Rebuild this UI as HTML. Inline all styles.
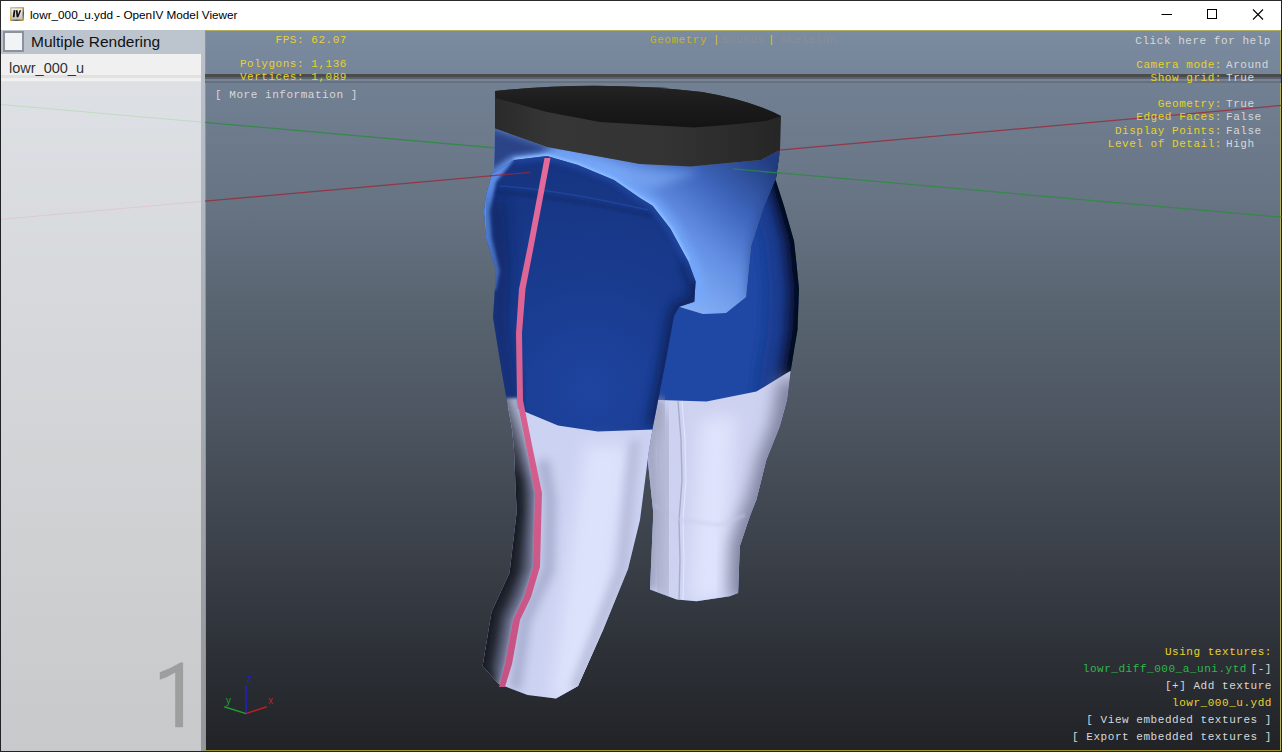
<!DOCTYPE html>
<html><head><meta charset="utf-8">
<style>
*{margin:0;padding:0;box-sizing:border-box}
html,body{width:1282px;height:752px;overflow:hidden;background:#202226}
body{position:relative;font-family:"Liberation Sans",sans-serif}
.abs{position:absolute}
#title{left:0;top:0;width:1281px;height:30px;background:#fff;border-top:1px solid #2a2a2a;border-left:1px solid #2a2a2a}
#vp{left:205px;top:30px;width:1076px;height:721px;background:linear-gradient(rgb(123,139,160) 0px,rgb(118,133,152) 44px,rgb(113,128,147) 52px,rgb(103,116,132) 170px,rgb(90,101,114) 270px,rgb(83,93,106) 330px,rgb(76,85,96) 390px,rgb(58,63,72) 530px,rgb(45,49,55) 620px,rgb(33,35,39) 715px);border:1px solid #b0ac60;border-bottom-color:#9a9030;border-left-color:#a09a40}
.mono{font-family:"Liberation Mono",monospace;font-size:11px;letter-spacing:0.54px;line-height:13px;white-space:pre}
.y{color:#e6d22e}
.w{color:#d8d8d8}
.g{color:#2fb84a}
</style></head>
<body>
<div id="vp" class="abs"></div>
<svg class="abs" style="left:0;top:0" width="1282" height="752">
<!-- horizon -->
<rect x="205" y="74" width="1076" height="3" fill="#4a4b4d"/>
<rect x="205" y="77" width="1076" height="2" fill="#59616e"/>
<rect x="205" y="79" width="1076" height="2" fill="#778596"/>
<rect x="205" y="81" width="1076" height="2" fill="#66707f"/>
<!-- grid lines -->
<line x1="205" y1="122.4" x2="1282" y2="217.2" stroke="#2a8c3c" stroke-width="1.3" opacity="0.8"/>
<line x1="205" y1="201.2" x2="1282" y2="105.4" stroke="#9a2838" stroke-width="1.3" opacity="0.8"/>
</svg>
<!-- PANTS --><svg class="abs" style="left:0;top:0" width="1282" height="752">
<defs>
<filter id="b3" x="-50%" y="-50%" width="200%" height="200%"><feGaussianBlur stdDeviation="3"/></filter>
<filter id="b5" x="-50%" y="-50%" width="200%" height="200%"><feGaussianBlur stdDeviation="5"/></filter>
<filter id="b8" x="-50%" y="-50%" width="200%" height="200%"><feGaussianBlur stdDeviation="8"/></filter>
<filter id="b12" x="-50%" y="-50%" width="200%" height="200%"><feGaussianBlur stdDeviation="12"/></filter>
<filter id="b2" x="-50%" y="-50%" width="200%" height="200%"><feGaussianBlur stdDeviation="1.5"/></filter>
<clipPath id="cRight"><path d="M679,307 L703,314 L726,313 L746,297 L751,246 L764,206 L776,178 L780,150 L775,178 L784,206 L794,241 L796,259 L799,289 L797.5,330 L794.4,348 L790.7,371 L787,400 L779.7,426.5 L766.4,459.8 L756.4,499.7 L749.8,516.4 L739.8,546.3 L738.1,592.9 L729.8,596.2 L696.5,601.2 L676.6,599.5 L650,589.5 L653.3,513 L647,453 L650,403 L660,360 L668,316 Z"/></clipPath>
<clipPath id="cLeft"><path d="M484,211 L486,195 L492,174 L514,160 L547,156 L578,165 L614,180 L640,198 L652.6,205.7 L670.3,228.4 L688,261 L695.6,281.4 L694.3,301.7 L679.2,306.7 L674,316 L666,360 L653,426.5 L649,450 L640,520 L628,569 L603,630 L578,686 L556,698.5 L527.5,695 L498.7,684 L482.6,666 L491.5,612 L509.5,573 L516.7,512 L514,450 L512,429.4 L502,373.6 L493,317.7 L496,271 L486,238 Z"/></clipPath>
<clipPath id="cHip"><path d="M495,128.5 L547,147 L640,164 L690.5,166.5 L761,160 L780,150 L776,178 L764,206 L751,246 L746,297 L726,313 L703,314 L679.2,306.7 L694.3,301.7 L695.6,281.4 L688,261 L670.3,228.4 L652.6,205.7 L640,198 L614,180 L578,165 L547,156 L514,160 L492,174 L486,206 L496,270 L494,171 Z"/></clipPath>
<linearGradient id="gLight" x1="775" y1="165" x2="665" y2="290" gradientUnits="userSpaceOnUse">
<stop offset="0" stop-color="#223c80"/>
<stop offset="0.35" stop-color="#3e66bc"/>
<stop offset="0.65" stop-color="#6490e4"/>
<stop offset="1" stop-color="#86b2f8"/>
</linearGradient>
<linearGradient id="gBand" x1="495" y1="0" x2="781" y2="0" gradientUnits="userSpaceOnUse">
<stop offset="0" stop-color="#2a2a2a"/>
<stop offset="0.2" stop-color="#363636"/>
<stop offset="0.6" stop-color="#333333"/>
<stop offset="1" stop-color="#262626"/>
</linearGradient>
<linearGradient id="gTop" x1="0" y1="84" x2="0" y2="127" gradientUnits="userSpaceOnUse">
<stop offset="0" stop-color="#242424"/>
<stop offset="0.5" stop-color="#1b1b1b"/>
<stop offset="1" stop-color="#141414"/>
</linearGradient>
</defs>
<!-- RIGHT LEG -->
<g clip-path="url(#cRight)">
<rect x="640" y="140" width="170" height="470" fill="#1f47a4"/>
<defs><linearGradient id="r0" x1="738.9" y1="0" x2="780.9" y2="0" gradientUnits="userSpaceOnUse"><stop offset="0" stop-color="#12307a" stop-opacity="0"/><stop offset="0.55" stop-color="#12307a" stop-opacity="0.55"/><stop offset="0.85" stop-color="#081640" stop-opacity="0.95"/><stop offset="1" stop-color="#03060e"/></linearGradient><linearGradient id="r1" x1="738.3" y1="0" x2="780.3" y2="0" gradientUnits="userSpaceOnUse"><stop offset="0" stop-color="#12307a" stop-opacity="0"/><stop offset="0.55" stop-color="#12307a" stop-opacity="0.55"/><stop offset="0.85" stop-color="#081640" stop-opacity="0.95"/><stop offset="1" stop-color="#03060e"/></linearGradient><linearGradient id="r2" x1="737.8" y1="0" x2="779.8" y2="0" gradientUnits="userSpaceOnUse"><stop offset="0" stop-color="#12307a" stop-opacity="0"/><stop offset="0.55" stop-color="#12307a" stop-opacity="0.55"/><stop offset="0.85" stop-color="#081640" stop-opacity="0.95"/><stop offset="1" stop-color="#03060e"/></linearGradient><linearGradient id="r3" x1="737.3" y1="0" x2="779.3" y2="0" gradientUnits="userSpaceOnUse"><stop offset="0" stop-color="#12307a" stop-opacity="0"/><stop offset="0.55" stop-color="#12307a" stop-opacity="0.55"/><stop offset="0.85" stop-color="#081640" stop-opacity="0.95"/><stop offset="1" stop-color="#03060e"/></linearGradient><linearGradient id="r4" x1="736.9" y1="0" x2="778.9" y2="0" gradientUnits="userSpaceOnUse"><stop offset="0" stop-color="#12307a" stop-opacity="0"/><stop offset="0.55" stop-color="#12307a" stop-opacity="0.55"/><stop offset="0.85" stop-color="#081640" stop-opacity="0.95"/><stop offset="1" stop-color="#03060e"/></linearGradient><linearGradient id="r5" x1="736.4" y1="0" x2="778.4" y2="0" gradientUnits="userSpaceOnUse"><stop offset="0" stop-color="#12307a" stop-opacity="0"/><stop offset="0.55" stop-color="#12307a" stop-opacity="0.55"/><stop offset="0.85" stop-color="#081640" stop-opacity="0.95"/><stop offset="1" stop-color="#03060e"/></linearGradient><linearGradient id="r6" x1="736.0" y1="0" x2="778.0" y2="0" gradientUnits="userSpaceOnUse"><stop offset="0" stop-color="#12307a" stop-opacity="0"/><stop offset="0.55" stop-color="#12307a" stop-opacity="0.55"/><stop offset="0.85" stop-color="#081640" stop-opacity="0.95"/><stop offset="1" stop-color="#03060e"/></linearGradient><linearGradient id="r7" x1="735.5" y1="0" x2="777.5" y2="0" gradientUnits="userSpaceOnUse"><stop offset="0" stop-color="#12307a" stop-opacity="0"/><stop offset="0.55" stop-color="#12307a" stop-opacity="0.55"/><stop offset="0.85" stop-color="#081640" stop-opacity="0.95"/><stop offset="1" stop-color="#03060e"/></linearGradient><linearGradient id="r8" x1="735.1" y1="0" x2="777.1" y2="0" gradientUnits="userSpaceOnUse"><stop offset="0" stop-color="#12307a" stop-opacity="0"/><stop offset="0.55" stop-color="#12307a" stop-opacity="0.55"/><stop offset="0.85" stop-color="#081640" stop-opacity="0.95"/><stop offset="1" stop-color="#03060e"/></linearGradient><linearGradient id="r9" x1="734.6" y1="0" x2="776.6" y2="0" gradientUnits="userSpaceOnUse"><stop offset="0" stop-color="#12307a" stop-opacity="0"/><stop offset="0.55" stop-color="#12307a" stop-opacity="0.55"/><stop offset="0.85" stop-color="#081640" stop-opacity="0.95"/><stop offset="1" stop-color="#03060e"/></linearGradient><linearGradient id="r10" x1="734.2" y1="0" x2="776.2" y2="0" gradientUnits="userSpaceOnUse"><stop offset="0" stop-color="#12307a" stop-opacity="0"/><stop offset="0.55" stop-color="#12307a" stop-opacity="0.55"/><stop offset="0.85" stop-color="#081640" stop-opacity="0.95"/><stop offset="1" stop-color="#03060e"/></linearGradient><linearGradient id="r11" x1="733.9" y1="0" x2="775.9" y2="0" gradientUnits="userSpaceOnUse"><stop offset="0" stop-color="#12307a" stop-opacity="0"/><stop offset="0.55" stop-color="#12307a" stop-opacity="0.55"/><stop offset="0.85" stop-color="#081640" stop-opacity="0.95"/><stop offset="1" stop-color="#03060e"/></linearGradient><linearGradient id="r12" x1="734.8" y1="0" x2="776.8" y2="0" gradientUnits="userSpaceOnUse"><stop offset="0" stop-color="#12307a" stop-opacity="0"/><stop offset="0.55" stop-color="#12307a" stop-opacity="0.55"/><stop offset="0.85" stop-color="#081640" stop-opacity="0.95"/><stop offset="1" stop-color="#03060e"/></linearGradient><linearGradient id="r13" x1="735.7" y1="0" x2="777.7" y2="0" gradientUnits="userSpaceOnUse"><stop offset="0" stop-color="#12307a" stop-opacity="0"/><stop offset="0.55" stop-color="#12307a" stop-opacity="0.55"/><stop offset="0.85" stop-color="#081640" stop-opacity="0.95"/><stop offset="1" stop-color="#03060e"/></linearGradient><linearGradient id="r14" x1="736.6" y1="0" x2="778.6" y2="0" gradientUnits="userSpaceOnUse"><stop offset="0" stop-color="#12307a" stop-opacity="0"/><stop offset="0.55" stop-color="#12307a" stop-opacity="0.55"/><stop offset="0.85" stop-color="#081640" stop-opacity="0.95"/><stop offset="1" stop-color="#03060e"/></linearGradient><linearGradient id="r15" x1="737.5" y1="0" x2="779.5" y2="0" gradientUnits="userSpaceOnUse"><stop offset="0" stop-color="#12307a" stop-opacity="0"/><stop offset="0.55" stop-color="#12307a" stop-opacity="0.55"/><stop offset="0.85" stop-color="#081640" stop-opacity="0.95"/><stop offset="1" stop-color="#03060e"/></linearGradient><linearGradient id="r16" x1="738.3" y1="0" x2="780.3" y2="0" gradientUnits="userSpaceOnUse"><stop offset="0" stop-color="#12307a" stop-opacity="0"/><stop offset="0.55" stop-color="#12307a" stop-opacity="0.55"/><stop offset="0.85" stop-color="#081640" stop-opacity="0.95"/><stop offset="1" stop-color="#03060e"/></linearGradient><linearGradient id="r17" x1="739.2" y1="0" x2="781.2" y2="0" gradientUnits="userSpaceOnUse"><stop offset="0" stop-color="#12307a" stop-opacity="0"/><stop offset="0.55" stop-color="#12307a" stop-opacity="0.55"/><stop offset="0.85" stop-color="#081640" stop-opacity="0.95"/><stop offset="1" stop-color="#03060e"/></linearGradient><linearGradient id="r18" x1="740.1" y1="0" x2="782.1" y2="0" gradientUnits="userSpaceOnUse"><stop offset="0" stop-color="#12307a" stop-opacity="0"/><stop offset="0.55" stop-color="#12307a" stop-opacity="0.55"/><stop offset="0.85" stop-color="#081640" stop-opacity="0.95"/><stop offset="1" stop-color="#03060e"/></linearGradient><linearGradient id="r19" x1="741.0" y1="0" x2="783.0" y2="0" gradientUnits="userSpaceOnUse"><stop offset="0" stop-color="#12307a" stop-opacity="0"/><stop offset="0.55" stop-color="#12307a" stop-opacity="0.55"/><stop offset="0.85" stop-color="#081640" stop-opacity="0.95"/><stop offset="1" stop-color="#03060e"/></linearGradient><linearGradient id="r20" x1="741.9" y1="0" x2="783.9" y2="0" gradientUnits="userSpaceOnUse"><stop offset="0" stop-color="#12307a" stop-opacity="0"/><stop offset="0.55" stop-color="#12307a" stop-opacity="0.55"/><stop offset="0.85" stop-color="#081640" stop-opacity="0.95"/><stop offset="1" stop-color="#03060e"/></linearGradient><linearGradient id="r21" x1="742.7" y1="0" x2="784.7" y2="0" gradientUnits="userSpaceOnUse"><stop offset="0" stop-color="#12307a" stop-opacity="0"/><stop offset="0.55" stop-color="#12307a" stop-opacity="0.55"/><stop offset="0.85" stop-color="#081640" stop-opacity="0.95"/><stop offset="1" stop-color="#03060e"/></linearGradient><linearGradient id="r22" x1="743.6" y1="0" x2="785.6" y2="0" gradientUnits="userSpaceOnUse"><stop offset="0" stop-color="#12307a" stop-opacity="0"/><stop offset="0.55" stop-color="#12307a" stop-opacity="0.55"/><stop offset="0.85" stop-color="#081640" stop-opacity="0.95"/><stop offset="1" stop-color="#03060e"/></linearGradient><linearGradient id="r23" x1="744.4" y1="0" x2="786.4" y2="0" gradientUnits="userSpaceOnUse"><stop offset="0" stop-color="#12307a" stop-opacity="0"/><stop offset="0.55" stop-color="#12307a" stop-opacity="0.55"/><stop offset="0.85" stop-color="#081640" stop-opacity="0.95"/><stop offset="1" stop-color="#03060e"/></linearGradient><linearGradient id="r24" x1="745.3" y1="0" x2="787.3" y2="0" gradientUnits="userSpaceOnUse"><stop offset="0" stop-color="#12307a" stop-opacity="0"/><stop offset="0.55" stop-color="#12307a" stop-opacity="0.55"/><stop offset="0.85" stop-color="#081640" stop-opacity="0.95"/><stop offset="1" stop-color="#03060e"/></linearGradient><linearGradient id="r25" x1="746.1" y1="0" x2="788.1" y2="0" gradientUnits="userSpaceOnUse"><stop offset="0" stop-color="#12307a" stop-opacity="0"/><stop offset="0.55" stop-color="#12307a" stop-opacity="0.55"/><stop offset="0.85" stop-color="#081640" stop-opacity="0.95"/><stop offset="1" stop-color="#03060e"/></linearGradient><linearGradient id="r26" x1="747.0" y1="0" x2="789.0" y2="0" gradientUnits="userSpaceOnUse"><stop offset="0" stop-color="#12307a" stop-opacity="0"/><stop offset="0.55" stop-color="#12307a" stop-opacity="0.55"/><stop offset="0.85" stop-color="#081640" stop-opacity="0.95"/><stop offset="1" stop-color="#03060e"/></linearGradient><linearGradient id="r27" x1="747.9" y1="0" x2="789.9" y2="0" gradientUnits="userSpaceOnUse"><stop offset="0" stop-color="#12307a" stop-opacity="0"/><stop offset="0.55" stop-color="#12307a" stop-opacity="0.55"/><stop offset="0.85" stop-color="#081640" stop-opacity="0.95"/><stop offset="1" stop-color="#03060e"/></linearGradient><linearGradient id="r28" x1="748.7" y1="0" x2="790.7" y2="0" gradientUnits="userSpaceOnUse"><stop offset="0" stop-color="#12307a" stop-opacity="0"/><stop offset="0.55" stop-color="#12307a" stop-opacity="0.55"/><stop offset="0.85" stop-color="#081640" stop-opacity="0.95"/><stop offset="1" stop-color="#03060e"/></linearGradient><linearGradient id="r29" x1="749.6" y1="0" x2="791.6" y2="0" gradientUnits="userSpaceOnUse"><stop offset="0" stop-color="#12307a" stop-opacity="0"/><stop offset="0.55" stop-color="#12307a" stop-opacity="0.55"/><stop offset="0.85" stop-color="#081640" stop-opacity="0.95"/><stop offset="1" stop-color="#03060e"/></linearGradient><linearGradient id="r30" x1="750.4" y1="0" x2="792.4" y2="0" gradientUnits="userSpaceOnUse"><stop offset="0" stop-color="#12307a" stop-opacity="0"/><stop offset="0.55" stop-color="#12307a" stop-opacity="0.55"/><stop offset="0.85" stop-color="#081640" stop-opacity="0.95"/><stop offset="1" stop-color="#03060e"/></linearGradient><linearGradient id="r31" x1="751.3" y1="0" x2="793.3" y2="0" gradientUnits="userSpaceOnUse"><stop offset="0" stop-color="#12307a" stop-opacity="0"/><stop offset="0.55" stop-color="#12307a" stop-opacity="0.55"/><stop offset="0.85" stop-color="#081640" stop-opacity="0.95"/><stop offset="1" stop-color="#03060e"/></linearGradient><linearGradient id="r32" x1="752.1" y1="0" x2="794.1" y2="0" gradientUnits="userSpaceOnUse"><stop offset="0" stop-color="#12307a" stop-opacity="0"/><stop offset="0.55" stop-color="#12307a" stop-opacity="0.55"/><stop offset="0.85" stop-color="#081640" stop-opacity="0.95"/><stop offset="1" stop-color="#03060e"/></linearGradient><linearGradient id="r33" x1="752.4" y1="0" x2="794.4" y2="0" gradientUnits="userSpaceOnUse"><stop offset="0" stop-color="#12307a" stop-opacity="0"/><stop offset="0.55" stop-color="#12307a" stop-opacity="0.55"/><stop offset="0.85" stop-color="#081640" stop-opacity="0.95"/><stop offset="1" stop-color="#03060e"/></linearGradient><linearGradient id="r34" x1="752.7" y1="0" x2="794.7" y2="0" gradientUnits="userSpaceOnUse"><stop offset="0" stop-color="#12307a" stop-opacity="0"/><stop offset="0.55" stop-color="#12307a" stop-opacity="0.55"/><stop offset="0.85" stop-color="#081640" stop-opacity="0.95"/><stop offset="1" stop-color="#03060e"/></linearGradient><linearGradient id="r35" x1="753.1" y1="0" x2="795.1" y2="0" gradientUnits="userSpaceOnUse"><stop offset="0" stop-color="#12307a" stop-opacity="0"/><stop offset="0.55" stop-color="#12307a" stop-opacity="0.55"/><stop offset="0.85" stop-color="#081640" stop-opacity="0.95"/><stop offset="1" stop-color="#03060e"/></linearGradient><linearGradient id="r36" x1="753.4" y1="0" x2="795.4" y2="0" gradientUnits="userSpaceOnUse"><stop offset="0" stop-color="#12307a" stop-opacity="0"/><stop offset="0.55" stop-color="#12307a" stop-opacity="0.55"/><stop offset="0.85" stop-color="#081640" stop-opacity="0.95"/><stop offset="1" stop-color="#03060e"/></linearGradient><linearGradient id="r37" x1="753.7" y1="0" x2="795.7" y2="0" gradientUnits="userSpaceOnUse"><stop offset="0" stop-color="#12307a" stop-opacity="0"/><stop offset="0.55" stop-color="#12307a" stop-opacity="0.55"/><stop offset="0.85" stop-color="#081640" stop-opacity="0.95"/><stop offset="1" stop-color="#03060e"/></linearGradient><linearGradient id="r38" x1="754.0" y1="0" x2="796.0" y2="0" gradientUnits="userSpaceOnUse"><stop offset="0" stop-color="#12307a" stop-opacity="0"/><stop offset="0.55" stop-color="#12307a" stop-opacity="0.55"/><stop offset="0.85" stop-color="#081640" stop-opacity="0.95"/><stop offset="1" stop-color="#03060e"/></linearGradient><linearGradient id="r39" x1="754.4" y1="0" x2="796.4" y2="0" gradientUnits="userSpaceOnUse"><stop offset="0" stop-color="#12307a" stop-opacity="0"/><stop offset="0.55" stop-color="#12307a" stop-opacity="0.55"/><stop offset="0.85" stop-color="#081640" stop-opacity="0.95"/><stop offset="1" stop-color="#03060e"/></linearGradient><linearGradient id="r40" x1="754.6" y1="0" x2="796.6" y2="0" gradientUnits="userSpaceOnUse"><stop offset="0" stop-color="#12307a" stop-opacity="0"/><stop offset="0.55" stop-color="#12307a" stop-opacity="0.55"/><stop offset="0.85" stop-color="#081640" stop-opacity="0.95"/><stop offset="1" stop-color="#03060e"/></linearGradient><linearGradient id="r41" x1="755.0" y1="0" x2="797.0" y2="0" gradientUnits="userSpaceOnUse"><stop offset="0" stop-color="#12307a" stop-opacity="0"/><stop offset="0.55" stop-color="#12307a" stop-opacity="0.55"/><stop offset="0.85" stop-color="#081640" stop-opacity="0.95"/><stop offset="1" stop-color="#03060e"/></linearGradient><linearGradient id="r42" x1="755.2" y1="0" x2="797.2" y2="0" gradientUnits="userSpaceOnUse"><stop offset="0" stop-color="#12307a" stop-opacity="0"/><stop offset="0.55" stop-color="#12307a" stop-opacity="0.55"/><stop offset="0.85" stop-color="#081640" stop-opacity="0.95"/><stop offset="1" stop-color="#03060e"/></linearGradient><linearGradient id="r43" x1="755.5" y1="0" x2="797.5" y2="0" gradientUnits="userSpaceOnUse"><stop offset="0" stop-color="#12307a" stop-opacity="0"/><stop offset="0.55" stop-color="#12307a" stop-opacity="0.55"/><stop offset="0.85" stop-color="#081640" stop-opacity="0.95"/><stop offset="1" stop-color="#03060e"/></linearGradient><linearGradient id="r44" x1="755.9" y1="0" x2="797.9" y2="0" gradientUnits="userSpaceOnUse"><stop offset="0" stop-color="#12307a" stop-opacity="0"/><stop offset="0.55" stop-color="#12307a" stop-opacity="0.55"/><stop offset="0.85" stop-color="#081640" stop-opacity="0.95"/><stop offset="1" stop-color="#03060e"/></linearGradient><linearGradient id="r45" x1="756.1" y1="0" x2="798.1" y2="0" gradientUnits="userSpaceOnUse"><stop offset="0" stop-color="#12307a" stop-opacity="0"/><stop offset="0.55" stop-color="#12307a" stop-opacity="0.55"/><stop offset="0.85" stop-color="#081640" stop-opacity="0.95"/><stop offset="1" stop-color="#03060e"/></linearGradient><linearGradient id="r46" x1="756.5" y1="0" x2="798.5" y2="0" gradientUnits="userSpaceOnUse"><stop offset="0" stop-color="#12307a" stop-opacity="0"/><stop offset="0.55" stop-color="#12307a" stop-opacity="0.55"/><stop offset="0.85" stop-color="#081640" stop-opacity="0.95"/><stop offset="1" stop-color="#03060e"/></linearGradient><linearGradient id="r47" x1="756.8" y1="0" x2="798.8" y2="0" gradientUnits="userSpaceOnUse"><stop offset="0" stop-color="#12307a" stop-opacity="0"/><stop offset="0.55" stop-color="#12307a" stop-opacity="0.55"/><stop offset="0.85" stop-color="#081640" stop-opacity="0.95"/><stop offset="1" stop-color="#03060e"/></linearGradient><linearGradient id="r48" x1="757.0" y1="0" x2="799.0" y2="0" gradientUnits="userSpaceOnUse"><stop offset="0" stop-color="#12307a" stop-opacity="0"/><stop offset="0.55" stop-color="#12307a" stop-opacity="0.55"/><stop offset="0.85" stop-color="#081640" stop-opacity="0.95"/><stop offset="1" stop-color="#03060e"/></linearGradient><linearGradient id="r49" x1="756.9" y1="0" x2="798.9" y2="0" gradientUnits="userSpaceOnUse"><stop offset="0" stop-color="#12307a" stop-opacity="0"/><stop offset="0.55" stop-color="#12307a" stop-opacity="0.55"/><stop offset="0.85" stop-color="#081640" stop-opacity="0.95"/><stop offset="1" stop-color="#03060e"/></linearGradient><linearGradient id="r50" x1="756.8" y1="0" x2="798.8" y2="0" gradientUnits="userSpaceOnUse"><stop offset="0" stop-color="#12307a" stop-opacity="0"/><stop offset="0.55" stop-color="#12307a" stop-opacity="0.55"/><stop offset="0.85" stop-color="#081640" stop-opacity="0.95"/><stop offset="1" stop-color="#03060e"/></linearGradient><linearGradient id="r51" x1="756.7" y1="0" x2="798.7" y2="0" gradientUnits="userSpaceOnUse"><stop offset="0" stop-color="#12307a" stop-opacity="0"/><stop offset="0.55" stop-color="#12307a" stop-opacity="0.55"/><stop offset="0.85" stop-color="#081640" stop-opacity="0.95"/><stop offset="1" stop-color="#03060e"/></linearGradient><linearGradient id="r52" x1="756.5" y1="0" x2="798.5" y2="0" gradientUnits="userSpaceOnUse"><stop offset="0" stop-color="#12307a" stop-opacity="0"/><stop offset="0.55" stop-color="#12307a" stop-opacity="0.55"/><stop offset="0.85" stop-color="#081640" stop-opacity="0.95"/><stop offset="1" stop-color="#03060e"/></linearGradient><linearGradient id="r53" x1="756.4" y1="0" x2="798.4" y2="0" gradientUnits="userSpaceOnUse"><stop offset="0" stop-color="#12307a" stop-opacity="0"/><stop offset="0.55" stop-color="#12307a" stop-opacity="0.55"/><stop offset="0.85" stop-color="#081640" stop-opacity="0.95"/><stop offset="1" stop-color="#03060e"/></linearGradient><linearGradient id="r54" x1="756.3" y1="0" x2="798.3" y2="0" gradientUnits="userSpaceOnUse"><stop offset="0" stop-color="#12307a" stop-opacity="0"/><stop offset="0.55" stop-color="#12307a" stop-opacity="0.55"/><stop offset="0.85" stop-color="#081640" stop-opacity="0.95"/><stop offset="1" stop-color="#03060e"/></linearGradient><linearGradient id="r55" x1="756.2" y1="0" x2="798.2" y2="0" gradientUnits="userSpaceOnUse"><stop offset="0" stop-color="#12307a" stop-opacity="0"/><stop offset="0.55" stop-color="#12307a" stop-opacity="0.55"/><stop offset="0.85" stop-color="#081640" stop-opacity="0.95"/><stop offset="1" stop-color="#03060e"/></linearGradient><linearGradient id="r56" x1="756.1" y1="0" x2="798.1" y2="0" gradientUnits="userSpaceOnUse"><stop offset="0" stop-color="#12307a" stop-opacity="0"/><stop offset="0.55" stop-color="#12307a" stop-opacity="0.55"/><stop offset="0.85" stop-color="#081640" stop-opacity="0.95"/><stop offset="1" stop-color="#03060e"/></linearGradient><linearGradient id="r57" x1="756.0" y1="0" x2="798.0" y2="0" gradientUnits="userSpaceOnUse"><stop offset="0" stop-color="#12307a" stop-opacity="0"/><stop offset="0.55" stop-color="#12307a" stop-opacity="0.55"/><stop offset="0.85" stop-color="#081640" stop-opacity="0.95"/><stop offset="1" stop-color="#03060e"/></linearGradient><linearGradient id="r58" x1="755.9" y1="0" x2="797.9" y2="0" gradientUnits="userSpaceOnUse"><stop offset="0" stop-color="#12307a" stop-opacity="0"/><stop offset="0.55" stop-color="#12307a" stop-opacity="0.55"/><stop offset="0.85" stop-color="#081640" stop-opacity="0.95"/><stop offset="1" stop-color="#03060e"/></linearGradient><linearGradient id="r59" x1="755.8" y1="0" x2="797.8" y2="0" gradientUnits="userSpaceOnUse"><stop offset="0" stop-color="#12307a" stop-opacity="0"/><stop offset="0.55" stop-color="#12307a" stop-opacity="0.55"/><stop offset="0.85" stop-color="#081640" stop-opacity="0.95"/><stop offset="1" stop-color="#03060e"/></linearGradient><linearGradient id="r60" x1="755.7" y1="0" x2="797.7" y2="0" gradientUnits="userSpaceOnUse"><stop offset="0" stop-color="#12307a" stop-opacity="0"/><stop offset="0.55" stop-color="#12307a" stop-opacity="0.55"/><stop offset="0.85" stop-color="#081640" stop-opacity="0.95"/><stop offset="1" stop-color="#03060e"/></linearGradient><linearGradient id="r61" x1="755.6" y1="0" x2="797.6" y2="0" gradientUnits="userSpaceOnUse"><stop offset="0" stop-color="#12307a" stop-opacity="0"/><stop offset="0.55" stop-color="#12307a" stop-opacity="0.55"/><stop offset="0.85" stop-color="#081640" stop-opacity="0.95"/><stop offset="1" stop-color="#03060e"/></linearGradient><linearGradient id="r62" x1="755.2" y1="0" x2="797.2" y2="0" gradientUnits="userSpaceOnUse"><stop offset="0" stop-color="#12307a" stop-opacity="0"/><stop offset="0.55" stop-color="#12307a" stop-opacity="0.55"/><stop offset="0.85" stop-color="#081640" stop-opacity="0.95"/><stop offset="1" stop-color="#03060e"/></linearGradient><linearGradient id="r63" x1="754.7" y1="0" x2="796.7" y2="0" gradientUnits="userSpaceOnUse"><stop offset="0" stop-color="#12307a" stop-opacity="0"/><stop offset="0.55" stop-color="#12307a" stop-opacity="0.55"/><stop offset="0.85" stop-color="#081640" stop-opacity="0.95"/><stop offset="1" stop-color="#03060e"/></linearGradient><linearGradient id="r64" x1="754.2" y1="0" x2="796.2" y2="0" gradientUnits="userSpaceOnUse"><stop offset="0" stop-color="#12307a" stop-opacity="0"/><stop offset="0.55" stop-color="#12307a" stop-opacity="0.55"/><stop offset="0.85" stop-color="#081640" stop-opacity="0.95"/><stop offset="1" stop-color="#03060e"/></linearGradient><linearGradient id="r65" x1="753.7" y1="0" x2="795.7" y2="0" gradientUnits="userSpaceOnUse"><stop offset="0" stop-color="#12307a" stop-opacity="0"/><stop offset="0.55" stop-color="#12307a" stop-opacity="0.55"/><stop offset="0.85" stop-color="#081640" stop-opacity="0.95"/><stop offset="1" stop-color="#03060e"/></linearGradient><linearGradient id="r66" x1="753.2" y1="0" x2="795.2" y2="0" gradientUnits="userSpaceOnUse"><stop offset="0" stop-color="#12307a" stop-opacity="0"/><stop offset="0.55" stop-color="#12307a" stop-opacity="0.55"/><stop offset="0.85" stop-color="#081640" stop-opacity="0.95"/><stop offset="1" stop-color="#03060e"/></linearGradient><linearGradient id="r67" x1="752.7" y1="0" x2="794.7" y2="0" gradientUnits="userSpaceOnUse"><stop offset="0" stop-color="#12307a" stop-opacity="0"/><stop offset="0.55" stop-color="#12307a" stop-opacity="0.55"/><stop offset="0.85" stop-color="#081640" stop-opacity="0.95"/><stop offset="1" stop-color="#03060e"/></linearGradient><linearGradient id="r68" x1="752.2" y1="0" x2="794.2" y2="0" gradientUnits="userSpaceOnUse"><stop offset="0" stop-color="#12307a" stop-opacity="0"/><stop offset="0.55" stop-color="#12307a" stop-opacity="0.55"/><stop offset="0.85" stop-color="#081640" stop-opacity="0.95"/><stop offset="1" stop-color="#03060e"/></linearGradient><linearGradient id="r69" x1="751.7" y1="0" x2="793.7" y2="0" gradientUnits="userSpaceOnUse"><stop offset="0" stop-color="#12307a" stop-opacity="0"/><stop offset="0.55" stop-color="#12307a" stop-opacity="0.55"/><stop offset="0.85" stop-color="#081640" stop-opacity="0.95"/><stop offset="1" stop-color="#03060e"/></linearGradient><linearGradient id="r70" x1="751.2" y1="0" x2="793.2" y2="0" gradientUnits="userSpaceOnUse"><stop offset="0" stop-color="#12307a" stop-opacity="0"/><stop offset="0.55" stop-color="#12307a" stop-opacity="0.55"/><stop offset="0.85" stop-color="#081640" stop-opacity="0.95"/><stop offset="1" stop-color="#03060e"/></linearGradient><linearGradient id="r71" x1="750.7" y1="0" x2="792.7" y2="0" gradientUnits="userSpaceOnUse"><stop offset="0" stop-color="#12307a" stop-opacity="0"/><stop offset="0.55" stop-color="#12307a" stop-opacity="0.55"/><stop offset="0.85" stop-color="#081640" stop-opacity="0.95"/><stop offset="1" stop-color="#03060e"/></linearGradient><linearGradient id="r72" x1="750.2" y1="0" x2="792.2" y2="0" gradientUnits="userSpaceOnUse"><stop offset="0" stop-color="#12307a" stop-opacity="0"/><stop offset="0.55" stop-color="#12307a" stop-opacity="0.55"/><stop offset="0.85" stop-color="#081640" stop-opacity="0.95"/><stop offset="1" stop-color="#03060e"/></linearGradient><linearGradient id="r73" x1="749.7" y1="0" x2="791.7" y2="0" gradientUnits="userSpaceOnUse"><stop offset="0" stop-color="#12307a" stop-opacity="0"/><stop offset="0.55" stop-color="#12307a" stop-opacity="0.55"/><stop offset="0.85" stop-color="#081640" stop-opacity="0.95"/><stop offset="1" stop-color="#03060e"/></linearGradient><linearGradient id="r74" x1="749.3" y1="0" x2="791.3" y2="0" gradientUnits="userSpaceOnUse"><stop offset="0" stop-color="#12307a" stop-opacity="0"/><stop offset="0.55" stop-color="#12307a" stop-opacity="0.55"/><stop offset="0.85" stop-color="#081640" stop-opacity="0.95"/><stop offset="1" stop-color="#03060e"/></linearGradient><linearGradient id="r75" x1="748.8" y1="0" x2="790.8" y2="0" gradientUnits="userSpaceOnUse"><stop offset="0" stop-color="#12307a" stop-opacity="0"/><stop offset="0.55" stop-color="#12307a" stop-opacity="0.55"/><stop offset="0.85" stop-color="#081640" stop-opacity="0.95"/><stop offset="1" stop-color="#03060e"/></linearGradient><linearGradient id="r76" x1="748.4" y1="0" x2="790.4" y2="0" gradientUnits="userSpaceOnUse"><stop offset="0" stop-color="#12307a" stop-opacity="0"/><stop offset="0.55" stop-color="#12307a" stop-opacity="0.55"/><stop offset="0.85" stop-color="#081640" stop-opacity="0.95"/><stop offset="1" stop-color="#03060e"/></linearGradient><linearGradient id="r77" x1="748.0" y1="0" x2="790.0" y2="0" gradientUnits="userSpaceOnUse"><stop offset="0" stop-color="#12307a" stop-opacity="0"/><stop offset="0.55" stop-color="#12307a" stop-opacity="0.55"/><stop offset="0.85" stop-color="#081640" stop-opacity="0.95"/><stop offset="1" stop-color="#03060e"/></linearGradient><linearGradient id="r78" x1="747.6" y1="0" x2="789.6" y2="0" gradientUnits="userSpaceOnUse"><stop offset="0" stop-color="#12307a" stop-opacity="0"/><stop offset="0.55" stop-color="#12307a" stop-opacity="0.55"/><stop offset="0.85" stop-color="#081640" stop-opacity="0.95"/><stop offset="1" stop-color="#03060e"/></linearGradient><linearGradient id="r79" x1="747.2" y1="0" x2="789.2" y2="0" gradientUnits="userSpaceOnUse"><stop offset="0" stop-color="#12307a" stop-opacity="0"/><stop offset="0.55" stop-color="#12307a" stop-opacity="0.55"/><stop offset="0.85" stop-color="#081640" stop-opacity="0.95"/><stop offset="1" stop-color="#03060e"/></linearGradient><linearGradient id="r80" x1="746.9" y1="0" x2="788.9" y2="0" gradientUnits="userSpaceOnUse"><stop offset="0" stop-color="#12307a" stop-opacity="0"/><stop offset="0.55" stop-color="#12307a" stop-opacity="0.55"/><stop offset="0.85" stop-color="#081640" stop-opacity="0.95"/><stop offset="1" stop-color="#03060e"/></linearGradient><linearGradient id="r81" x1="746.5" y1="0" x2="788.5" y2="0" gradientUnits="userSpaceOnUse"><stop offset="0" stop-color="#12307a" stop-opacity="0"/><stop offset="0.55" stop-color="#12307a" stop-opacity="0.55"/><stop offset="0.85" stop-color="#081640" stop-opacity="0.95"/><stop offset="1" stop-color="#03060e"/></linearGradient><linearGradient id="r82" x1="746.1" y1="0" x2="788.1" y2="0" gradientUnits="userSpaceOnUse"><stop offset="0" stop-color="#12307a" stop-opacity="0"/><stop offset="0.55" stop-color="#12307a" stop-opacity="0.55"/><stop offset="0.85" stop-color="#081640" stop-opacity="0.95"/><stop offset="1" stop-color="#03060e"/></linearGradient><linearGradient id="r83" x1="745.7" y1="0" x2="787.7" y2="0" gradientUnits="userSpaceOnUse"><stop offset="0" stop-color="#12307a" stop-opacity="0"/><stop offset="0.55" stop-color="#12307a" stop-opacity="0.55"/><stop offset="0.85" stop-color="#081640" stop-opacity="0.95"/><stop offset="1" stop-color="#03060e"/></linearGradient><linearGradient id="r84" x1="745.3" y1="0" x2="787.3" y2="0" gradientUnits="userSpaceOnUse"><stop offset="0" stop-color="#12307a" stop-opacity="0"/><stop offset="0.55" stop-color="#12307a" stop-opacity="0.55"/><stop offset="0.85" stop-color="#081640" stop-opacity="0.95"/><stop offset="1" stop-color="#03060e"/></linearGradient><linearGradient id="r85" x1="744.9" y1="0" x2="786.9" y2="0" gradientUnits="userSpaceOnUse"><stop offset="0" stop-color="#12307a" stop-opacity="0"/><stop offset="0.55" stop-color="#12307a" stop-opacity="0.55"/><stop offset="0.85" stop-color="#081640" stop-opacity="0.95"/><stop offset="1" stop-color="#03060e"/></linearGradient><linearGradient id="r86" x1="744.1" y1="0" x2="786.1" y2="0" gradientUnits="userSpaceOnUse"><stop offset="0" stop-color="#12307a" stop-opacity="0"/><stop offset="0.55" stop-color="#12307a" stop-opacity="0.55"/><stop offset="0.85" stop-color="#081640" stop-opacity="0.95"/><stop offset="1" stop-color="#03060e"/></linearGradient></defs><g filter="url(#b2)"><rect x="738.9" y="144" width="50" height="3.2" fill="url(#r0)"/><rect x="738.3" y="147" width="50" height="3.2" fill="url(#r1)"/><rect x="737.8" y="150" width="50" height="3.2" fill="url(#r2)"/><rect x="737.3" y="153" width="50" height="3.2" fill="url(#r3)"/><rect x="736.9" y="156" width="50" height="3.2" fill="url(#r4)"/><rect x="736.4" y="159" width="50" height="3.2" fill="url(#r5)"/><rect x="736.0" y="162" width="50" height="3.2" fill="url(#r6)"/><rect x="735.5" y="165" width="50" height="3.2" fill="url(#r7)"/><rect x="735.1" y="168" width="50" height="3.2" fill="url(#r8)"/><rect x="734.6" y="171" width="50" height="3.2" fill="url(#r9)"/><rect x="734.2" y="174" width="50" height="3.2" fill="url(#r10)"/><rect x="733.9" y="177" width="50" height="3.2" fill="url(#r11)"/><rect x="734.8" y="180" width="50" height="3.2" fill="url(#r12)"/><rect x="735.7" y="183" width="50" height="3.2" fill="url(#r13)"/><rect x="736.6" y="186" width="50" height="3.2" fill="url(#r14)"/><rect x="737.5" y="189" width="50" height="3.2" fill="url(#r15)"/><rect x="738.3" y="192" width="50" height="3.2" fill="url(#r16)"/><rect x="739.2" y="195" width="50" height="3.2" fill="url(#r17)"/><rect x="740.1" y="198" width="50" height="3.2" fill="url(#r18)"/><rect x="741.0" y="201" width="50" height="3.2" fill="url(#r19)"/><rect x="741.9" y="204" width="50" height="3.2" fill="url(#r20)"/><rect x="742.7" y="207" width="50" height="3.2" fill="url(#r21)"/><rect x="743.6" y="210" width="50" height="3.2" fill="url(#r22)"/><rect x="744.4" y="213" width="50" height="3.2" fill="url(#r23)"/><rect x="745.3" y="216" width="50" height="3.2" fill="url(#r24)"/><rect x="746.1" y="219" width="50" height="3.2" fill="url(#r25)"/><rect x="747.0" y="222" width="50" height="3.2" fill="url(#r26)"/><rect x="747.9" y="225" width="50" height="3.2" fill="url(#r27)"/><rect x="748.7" y="228" width="50" height="3.2" fill="url(#r28)"/><rect x="749.6" y="231" width="50" height="3.2" fill="url(#r29)"/><rect x="750.4" y="234" width="50" height="3.2" fill="url(#r30)"/><rect x="751.3" y="237" width="50" height="3.2" fill="url(#r31)"/><rect x="752.1" y="240" width="50" height="3.2" fill="url(#r32)"/><rect x="752.4" y="243" width="50" height="3.2" fill="url(#r33)"/><rect x="752.7" y="246" width="50" height="3.2" fill="url(#r34)"/><rect x="753.1" y="249" width="50" height="3.2" fill="url(#r35)"/><rect x="753.4" y="252" width="50" height="3.2" fill="url(#r36)"/><rect x="753.7" y="255" width="50" height="3.2" fill="url(#r37)"/><rect x="754.0" y="258" width="50" height="3.2" fill="url(#r38)"/><rect x="754.4" y="261" width="50" height="3.2" fill="url(#r39)"/><rect x="754.6" y="264" width="50" height="3.2" fill="url(#r40)"/><rect x="755.0" y="267" width="50" height="3.2" fill="url(#r41)"/><rect x="755.2" y="270" width="50" height="3.2" fill="url(#r42)"/><rect x="755.5" y="273" width="50" height="3.2" fill="url(#r43)"/><rect x="755.9" y="276" width="50" height="3.2" fill="url(#r44)"/><rect x="756.1" y="279" width="50" height="3.2" fill="url(#r45)"/><rect x="756.5" y="282" width="50" height="3.2" fill="url(#r46)"/><rect x="756.8" y="285" width="50" height="3.2" fill="url(#r47)"/><rect x="757.0" y="288" width="50" height="3.2" fill="url(#r48)"/><rect x="756.9" y="291" width="50" height="3.2" fill="url(#r49)"/><rect x="756.8" y="294" width="50" height="3.2" fill="url(#r50)"/><rect x="756.7" y="297" width="50" height="3.2" fill="url(#r51)"/><rect x="756.5" y="300" width="50" height="3.2" fill="url(#r52)"/><rect x="756.4" y="303" width="50" height="3.2" fill="url(#r53)"/><rect x="756.3" y="306" width="50" height="3.2" fill="url(#r54)"/><rect x="756.2" y="309" width="50" height="3.2" fill="url(#r55)"/><rect x="756.1" y="312" width="50" height="3.2" fill="url(#r56)"/><rect x="756.0" y="315" width="50" height="3.2" fill="url(#r57)"/><rect x="755.9" y="318" width="50" height="3.2" fill="url(#r58)"/><rect x="755.8" y="321" width="50" height="3.2" fill="url(#r59)"/><rect x="755.7" y="324" width="50" height="3.2" fill="url(#r60)"/><rect x="755.6" y="327" width="50" height="3.2" fill="url(#r61)"/><rect x="755.2" y="330" width="50" height="3.2" fill="url(#r62)"/><rect x="754.7" y="333" width="50" height="3.2" fill="url(#r63)"/><rect x="754.2" y="336" width="50" height="3.2" fill="url(#r64)"/><rect x="753.7" y="339" width="50" height="3.2" fill="url(#r65)"/><rect x="753.2" y="342" width="50" height="3.2" fill="url(#r66)"/><rect x="752.7" y="345" width="50" height="3.2" fill="url(#r67)"/><rect x="752.2" y="348" width="50" height="3.2" fill="url(#r68)"/><rect x="751.7" y="351" width="50" height="3.2" fill="url(#r69)"/><rect x="751.2" y="354" width="50" height="3.2" fill="url(#r70)"/><rect x="750.7" y="357" width="50" height="3.2" fill="url(#r71)"/><rect x="750.2" y="360" width="50" height="3.2" fill="url(#r72)"/><rect x="749.7" y="363" width="50" height="3.2" fill="url(#r73)"/><rect x="749.3" y="366" width="50" height="3.2" fill="url(#r74)"/><rect x="748.8" y="369" width="50" height="3.2" fill="url(#r75)"/><rect x="748.4" y="372" width="50" height="3.2" fill="url(#r76)"/><rect x="748.0" y="375" width="50" height="3.2" fill="url(#r77)"/><rect x="747.6" y="378" width="50" height="3.2" fill="url(#r78)"/><rect x="747.2" y="381" width="50" height="3.2" fill="url(#r79)"/><rect x="746.9" y="384" width="50" height="3.2" fill="url(#r80)"/><rect x="746.5" y="387" width="50" height="3.2" fill="url(#r81)"/><rect x="746.1" y="390" width="50" height="3.2" fill="url(#r82)"/><rect x="745.7" y="393" width="50" height="3.2" fill="url(#r83)"/><rect x="745.3" y="396" width="50" height="3.2" fill="url(#r84)"/><rect x="744.9" y="399" width="50" height="3.2" fill="url(#r85)"/><rect x="744.1" y="402" width="50" height="3.2" fill="url(#r86)"/></g>
<path d="M640,400 L660,400 L706.5,401.6 L756.4,391.6 L786.4,373.3 L810,360 L810,610 L640,610 Z" fill="#cdd2f0"/>
<path d="M700,420 L735,415 L725,600 L690,600 Z" fill="#dfe3fc" filter="url(#b8)"/>
<path d="M792,380 L784,426.5 L771,459.8 L761,499.7 L754,516.4 L744,546.3 L742,600" stroke="#7e829e" stroke-width="26" fill="none" filter="url(#b8)"/>
<path d="M660,400 L651,450 L654,513 L651,590" stroke="#9ca0bc" stroke-width="12" fill="none" filter="url(#b5)"/>
<path d="M678,401 L681,440 L682,480 L679,520 L680,560 L679,600" stroke="#a8acc8" stroke-width="1.4" fill="none"/>
<path d="M682,401 L685,440 L686,480 L683,520 L684,560 L683,600" stroke="#e8ecff" stroke-width="1.2" fill="none" opacity="0.7"/>
<path d="M655,505 L680,520 L720,525 L745,515" stroke="#c8cce8" stroke-width="3" fill="none" opacity="0.5" filter="url(#b2)"/>
<path d="M660,410 L666,470 L662,600" stroke="#a6aac6" stroke-width="18" fill="none" opacity="0.8" filter="url(#b8)"/>
</g>
<!-- HIP LIGHT REGION -->
<g clip-path="url(#cHip)">
<rect x="480" y="120" width="310" height="200" fill="url(#gLight)"/>
<path d="M480,118 L495,127 L560,149 L540,156 L512,161 L494,178 L486,200 L476,200 Z" fill="#22397a" opacity="0.9" filter="url(#b5)"/>
<path d="M790,150 L776,178 L764,206 L751,246 L746,297 L800,297 Z" fill="#1a3070" opacity="0.45" filter="url(#b5)"/>
<path d="M580,156 L640,168 L700,172 L650,190 L600,176 Z" fill="#88b6ff" opacity="0.5" filter="url(#b5)"/>
<path d="M547,156 L578,165 L614,180 L640,198 L652.6,205.7 L670.3,228.4 L688,261 L695.6,281.4 L694.3,301.7" stroke="#74a8fc" stroke-width="16" fill="none" opacity="0.9" filter="url(#b5)"/>
<path d="M486,206 L492,174 L514,160 L547,156 L570,162" stroke="#6a9cf4" stroke-width="6" fill="none" opacity="0.9" filter="url(#b3)"/>
<path d="M514,160 L547,156 L578,165 L614,180 L640,198 L652.6,205.7 L670.3,228.4 L688,261" stroke="#90c0ff" stroke-width="4" fill="none" filter="url(#b2)"/>
</g>
<!-- LEFT LEG -->
<g clip-path="url(#cLeft)">
<radialGradient id="gThighL" cx="590" cy="390" r="230" gradientUnits="userSpaceOnUse"><stop offset="0" stop-color="#1e44a0"/><stop offset="0.45" stop-color="#1a3c90"/><stop offset="1" stop-color="#163480"/></radialGradient>
<rect x="470" y="150" width="240" height="560" fill="url(#gThighL)"/>
<path d="M688,261 L695.6,281.4 L694.3,301.7 L679.2,306.7 L674,316 L666,360 L653,426.5" stroke="#0c2058" stroke-width="14" fill="none" opacity="0.8" filter="url(#b5)"/>
<path d="M470,150 L514,160 L496,182 L490,211 L492,238 L500,271 L496,290 L470,290 Z" fill="#5a8ae4" filter="url(#b2)"/>
<path d="M496,200 L502,270 L499,320 L507,374 L516,430" stroke="#0e1e50" stroke-width="14" fill="none" opacity="0.6" filter="url(#b8)"/>
<path d="M514,160 L547,156 L578,165 L614,180 L640,198 L652.6,205.7 L670.3,228.4 L688,261 L695.6,281.4" stroke="#2a58c0" stroke-width="6" fill="none" opacity="0.6" filter="url(#b3)"/>
<path d="M497,192 Q560,196 652,216" stroke="#10285e" stroke-width="2.5" fill="none" opacity="0.6" filter="url(#b2)"/>
<path d="M500,186 Q560,190 648,210" stroke="#2a52b0" stroke-width="1.5" fill="none" opacity="0.5"/>
<path d="M470,400 L510,405.5 L558,425.4 L597.8,431.4 L653.6,429.4 L710,420 L710,710 L470,710 Z" fill="#ccd2f1"/>
<path d="M585,445 L630,445 L595,700 L550,700 Z" fill="#dde2fc" filter="url(#b8)"/>
<defs><linearGradient id="h0" x1="507.5" y1="0" x2="517.0" y2="0" gradientUnits="userSpaceOnUse"><stop offset="0" stop-color="#787e96"/><stop offset="0.35" stop-color="#969cb6"/><stop offset="1" stop-color="#b0b6d2"/></linearGradient><linearGradient id="h1" x1="507.9" y1="0" x2="517.5" y2="0" gradientUnits="userSpaceOnUse"><stop offset="0" stop-color="#757b92"/><stop offset="0.35" stop-color="#9398b2"/><stop offset="1" stop-color="#aeb4d0"/></linearGradient><linearGradient id="h2" x1="508.4" y1="0" x2="518.1" y2="0" gradientUnits="userSpaceOnUse"><stop offset="0" stop-color="#71778e"/><stop offset="0.35" stop-color="#8e94ad"/><stop offset="1" stop-color="#acb2cf"/></linearGradient><linearGradient id="h3" x1="508.8" y1="0" x2="518.7" y2="0" gradientUnits="userSpaceOnUse"><stop offset="0" stop-color="#6e738a"/><stop offset="0.35" stop-color="#8a90a9"/><stop offset="1" stop-color="#aab0cd"/></linearGradient><linearGradient id="h4" x1="509.3" y1="0" x2="519.3" y2="0" gradientUnits="userSpaceOnUse"><stop offset="0" stop-color="#6a7085"/><stop offset="0.35" stop-color="#868ca4"/><stop offset="1" stop-color="#a8aecb"/></linearGradient><linearGradient id="h5" x1="509.8" y1="0" x2="519.9" y2="0" gradientUnits="userSpaceOnUse"><stop offset="0" stop-color="#676c81"/><stop offset="0.35" stop-color="#82889f"/><stop offset="1" stop-color="#a6acc9"/></linearGradient><linearGradient id="h6" x1="510.2" y1="0" x2="520.5" y2="0" gradientUnits="userSpaceOnUse"><stop offset="0" stop-color="#63687d"/><stop offset="0.35" stop-color="#7e839a"/><stop offset="1" stop-color="#a4aac7"/></linearGradient><linearGradient id="h7" x1="510.7" y1="0" x2="521.1" y2="0" gradientUnits="userSpaceOnUse"><stop offset="0" stop-color="#5f6478"/><stop offset="0.35" stop-color="#7a7f95"/><stop offset="1" stop-color="#a2a8c5"/></linearGradient><linearGradient id="h8" x1="511.2" y1="0" x2="521.7" y2="0" gradientUnits="userSpaceOnUse"><stop offset="0" stop-color="#5c6174"/><stop offset="0.35" stop-color="#757b91"/><stop offset="1" stop-color="#a0a6c3"/></linearGradient><linearGradient id="h9" x1="511.6" y1="0" x2="522.3" y2="0" gradientUnits="userSpaceOnUse"><stop offset="0" stop-color="#585d70"/><stop offset="0.35" stop-color="#71778c"/><stop offset="1" stop-color="#9ea4c1"/></linearGradient><linearGradient id="h10" x1="512.0" y1="0" x2="522.9" y2="0" gradientUnits="userSpaceOnUse"><stop offset="0" stop-color="#55596b"/><stop offset="0.35" stop-color="#6d7287"/><stop offset="1" stop-color="#9ca2c0"/></linearGradient><linearGradient id="h11" x1="512.3" y1="0" x2="523.5" y2="0" gradientUnits="userSpaceOnUse"><stop offset="0" stop-color="#515567"/><stop offset="0.35" stop-color="#696e82"/><stop offset="1" stop-color="#9aa0be"/></linearGradient><linearGradient id="h12" x1="512.6" y1="0" x2="524.1" y2="0" gradientUnits="userSpaceOnUse"><stop offset="0" stop-color="#4d5263"/><stop offset="0.35" stop-color="#656a7e"/><stop offset="1" stop-color="#989ebc"/></linearGradient><linearGradient id="h13" x1="512.9" y1="0" x2="524.7" y2="0" gradientUnits="userSpaceOnUse"><stop offset="0" stop-color="#4a4e5e"/><stop offset="0.35" stop-color="#616679"/><stop offset="1" stop-color="#969cba"/></linearGradient><linearGradient id="h14" x1="513.2" y1="0" x2="525.3" y2="0" gradientUnits="userSpaceOnUse"><stop offset="0" stop-color="#464a5a"/><stop offset="0.35" stop-color="#5c6174"/><stop offset="1" stop-color="#949ab8"/></linearGradient><linearGradient id="h15" x1="513.5" y1="0" x2="525.9" y2="0" gradientUnits="userSpaceOnUse"><stop offset="0" stop-color="#434655"/><stop offset="0.35" stop-color="#585d6f"/><stop offset="1" stop-color="#9298b6"/></linearGradient><linearGradient id="h16" x1="513.8" y1="0" x2="526.5" y2="0" gradientUnits="userSpaceOnUse"><stop offset="0" stop-color="#3f4351"/><stop offset="0.35" stop-color="#54596b"/><stop offset="1" stop-color="#9096b4"/></linearGradient><linearGradient id="h17" x1="514.0" y1="0" x2="527.1" y2="0" gradientUnits="userSpaceOnUse"><stop offset="0" stop-color="#3b3f4d"/><stop offset="0.35" stop-color="#505566"/><stop offset="1" stop-color="#8e94b2"/></linearGradient><linearGradient id="h18" x1="514.2" y1="0" x2="527.7" y2="0" gradientUnits="userSpaceOnUse"><stop offset="0" stop-color="#383b48"/><stop offset="0.35" stop-color="#4c5061"/><stop offset="1" stop-color="#8c92b1"/></linearGradient><linearGradient id="h19" x1="514.3" y1="0" x2="528.2" y2="0" gradientUnits="userSpaceOnUse"><stop offset="0" stop-color="#343744"/><stop offset="0.35" stop-color="#484c5c"/><stop offset="1" stop-color="#8a90af"/></linearGradient><linearGradient id="h20" x1="514.4" y1="0" x2="528.8" y2="0" gradientUnits="userSpaceOnUse"><stop offset="0" stop-color="#313440"/><stop offset="0.35" stop-color="#434858"/><stop offset="1" stop-color="#888ead"/></linearGradient><linearGradient id="h21" x1="514.5" y1="0" x2="529.3" y2="0" gradientUnits="userSpaceOnUse"><stop offset="0" stop-color="#2d303b"/><stop offset="0.35" stop-color="#3f4453"/><stop offset="1" stop-color="#868cab"/></linearGradient><linearGradient id="h22" x1="514.7" y1="0" x2="529.9" y2="0" gradientUnits="userSpaceOnUse"><stop offset="0" stop-color="#292c37"/><stop offset="0.35" stop-color="#3b3f4e"/><stop offset="1" stop-color="#848aa9"/></linearGradient><linearGradient id="h23" x1="514.8" y1="0" x2="530.4" y2="0" gradientUnits="userSpaceOnUse"><stop offset="0" stop-color="#262833"/><stop offset="0.35" stop-color="#373b49"/><stop offset="1" stop-color="#8288a7"/></linearGradient><linearGradient id="h24" x1="514.9" y1="0" x2="531.0" y2="0" gradientUnits="userSpaceOnUse"><stop offset="0" stop-color="#22252e"/><stop offset="0.35" stop-color="#333744"/><stop offset="1" stop-color="#8086a5"/></linearGradient><linearGradient id="h25" x1="515.1" y1="0" x2="531.6" y2="0" gradientUnits="userSpaceOnUse"><stop offset="0" stop-color="#1f212a"/><stop offset="0.35" stop-color="#2f3340"/><stop offset="1" stop-color="#7e84a3"/></linearGradient><linearGradient id="h26" x1="515.2" y1="0" x2="532.1" y2="0" gradientUnits="userSpaceOnUse"><stop offset="0" stop-color="#1b1d26"/><stop offset="0.35" stop-color="#2a2f3b"/><stop offset="1" stop-color="#7c82a2"/></linearGradient><linearGradient id="h27" x1="515.3" y1="0" x2="532.7" y2="0" gradientUnits="userSpaceOnUse"><stop offset="0" stop-color="#181a22"/><stop offset="0.35" stop-color="#272b37"/><stop offset="1" stop-color="#7a80a0"/></linearGradient><linearGradient id="h28" x1="515.5" y1="0" x2="533.2" y2="0" gradientUnits="userSpaceOnUse"><stop offset="0" stop-color="#181a22"/><stop offset="0.35" stop-color="#272b37"/><stop offset="1" stop-color="#7a80a0"/></linearGradient><linearGradient id="h29" x1="515.6" y1="0" x2="533.8" y2="0" gradientUnits="userSpaceOnUse"><stop offset="0" stop-color="#181a22"/><stop offset="0.35" stop-color="#272b37"/><stop offset="1" stop-color="#7a80a0"/></linearGradient><linearGradient id="h30" x1="515.7" y1="0" x2="534.3" y2="0" gradientUnits="userSpaceOnUse"><stop offset="0" stop-color="#181a22"/><stop offset="0.35" stop-color="#272b37"/><stop offset="1" stop-color="#7a80a0"/></linearGradient><linearGradient id="h31" x1="515.9" y1="0" x2="534.9" y2="0" gradientUnits="userSpaceOnUse"><stop offset="0" stop-color="#181a22"/><stop offset="0.35" stop-color="#272b37"/><stop offset="1" stop-color="#7a80a0"/></linearGradient><linearGradient id="h32" x1="516.0" y1="0" x2="534.9" y2="0" gradientUnits="userSpaceOnUse"><stop offset="0" stop-color="#181a22"/><stop offset="0.35" stop-color="#272b37"/><stop offset="1" stop-color="#7a80a0"/></linearGradient><linearGradient id="h33" x1="516.1" y1="0" x2="534.9" y2="0" gradientUnits="userSpaceOnUse"><stop offset="0" stop-color="#181a22"/><stop offset="0.35" stop-color="#272b37"/><stop offset="1" stop-color="#7a80a0"/></linearGradient><linearGradient id="h34" x1="516.2" y1="0" x2="534.8" y2="0" gradientUnits="userSpaceOnUse"><stop offset="0" stop-color="#181a22"/><stop offset="0.35" stop-color="#272b37"/><stop offset="1" stop-color="#7a80a0"/></linearGradient><linearGradient id="h35" x1="516.4" y1="0" x2="534.7" y2="0" gradientUnits="userSpaceOnUse"><stop offset="0" stop-color="#181a22"/><stop offset="0.35" stop-color="#272b37"/><stop offset="1" stop-color="#7a80a0"/></linearGradient><linearGradient id="h36" x1="516.5" y1="0" x2="534.6" y2="0" gradientUnits="userSpaceOnUse"><stop offset="0" stop-color="#181a22"/><stop offset="0.35" stop-color="#272b37"/><stop offset="1" stop-color="#7a80a0"/></linearGradient><linearGradient id="h37" x1="516.6" y1="0" x2="534.5" y2="0" gradientUnits="userSpaceOnUse"><stop offset="0" stop-color="#181a22"/><stop offset="0.35" stop-color="#272b37"/><stop offset="1" stop-color="#7a80a0"/></linearGradient><linearGradient id="h38" x1="516.5" y1="0" x2="534.4" y2="0" gradientUnits="userSpaceOnUse"><stop offset="0" stop-color="#181a22"/><stop offset="0.35" stop-color="#272b37"/><stop offset="1" stop-color="#7a80a0"/></linearGradient><linearGradient id="h39" x1="516.2" y1="0" x2="534.4" y2="0" gradientUnits="userSpaceOnUse"><stop offset="0" stop-color="#181a22"/><stop offset="0.35" stop-color="#272b37"/><stop offset="1" stop-color="#7a80a0"/></linearGradient><linearGradient id="h40" x1="515.8" y1="0" x2="534.3" y2="0" gradientUnits="userSpaceOnUse"><stop offset="0" stop-color="#181a22"/><stop offset="0.35" stop-color="#272b37"/><stop offset="1" stop-color="#7a80a0"/></linearGradient><linearGradient id="h41" x1="515.5" y1="0" x2="534.2" y2="0" gradientUnits="userSpaceOnUse"><stop offset="0" stop-color="#181a22"/><stop offset="0.35" stop-color="#272b37"/><stop offset="1" stop-color="#7a80a0"/></linearGradient><linearGradient id="h42" x1="515.1" y1="0" x2="534.1" y2="0" gradientUnits="userSpaceOnUse"><stop offset="0" stop-color="#181a22"/><stop offset="0.35" stop-color="#272b37"/><stop offset="1" stop-color="#7a80a0"/></linearGradient><linearGradient id="h43" x1="514.8" y1="0" x2="534.0" y2="0" gradientUnits="userSpaceOnUse"><stop offset="0" stop-color="#181a22"/><stop offset="0.35" stop-color="#272b37"/><stop offset="1" stop-color="#7a80a0"/></linearGradient><linearGradient id="h44" x1="514.4" y1="0" x2="534.0" y2="0" gradientUnits="userSpaceOnUse"><stop offset="0" stop-color="#181a22"/><stop offset="0.35" stop-color="#272b37"/><stop offset="1" stop-color="#7a80a0"/></linearGradient><linearGradient id="h45" x1="514.0" y1="0" x2="533.9" y2="0" gradientUnits="userSpaceOnUse"><stop offset="0" stop-color="#181a22"/><stop offset="0.35" stop-color="#272b37"/><stop offset="1" stop-color="#7a80a0"/></linearGradient><linearGradient id="h46" x1="513.7" y1="0" x2="533.8" y2="0" gradientUnits="userSpaceOnUse"><stop offset="0" stop-color="#181a22"/><stop offset="0.35" stop-color="#272b37"/><stop offset="1" stop-color="#7a80a0"/></linearGradient><linearGradient id="h47" x1="513.3" y1="0" x2="533.7" y2="0" gradientUnits="userSpaceOnUse"><stop offset="0" stop-color="#181a22"/><stop offset="0.35" stop-color="#272b37"/><stop offset="1" stop-color="#7a80a0"/></linearGradient><linearGradient id="h48" x1="513.0" y1="0" x2="533.6" y2="0" gradientUnits="userSpaceOnUse"><stop offset="0" stop-color="#181a22"/><stop offset="0.35" stop-color="#272b37"/><stop offset="1" stop-color="#7a80a0"/></linearGradient><linearGradient id="h49" x1="512.6" y1="0" x2="533.6" y2="0" gradientUnits="userSpaceOnUse"><stop offset="0" stop-color="#181a22"/><stop offset="0.35" stop-color="#272b37"/><stop offset="1" stop-color="#7a80a0"/></linearGradient><linearGradient id="h50" x1="512.3" y1="0" x2="533.5" y2="0" gradientUnits="userSpaceOnUse"><stop offset="0" stop-color="#181a22"/><stop offset="0.35" stop-color="#272b37"/><stop offset="1" stop-color="#7a80a0"/></linearGradient><linearGradient id="h51" x1="511.9" y1="0" x2="533.4" y2="0" gradientUnits="userSpaceOnUse"><stop offset="0" stop-color="#181a22"/><stop offset="0.35" stop-color="#272b37"/><stop offset="1" stop-color="#7a80a0"/></linearGradient><linearGradient id="h52" x1="511.6" y1="0" x2="533.3" y2="0" gradientUnits="userSpaceOnUse"><stop offset="0" stop-color="#181a22"/><stop offset="0.35" stop-color="#272b37"/><stop offset="1" stop-color="#7a80a0"/></linearGradient><linearGradient id="h53" x1="511.2" y1="0" x2="533.2" y2="0" gradientUnits="userSpaceOnUse"><stop offset="0" stop-color="#181a22"/><stop offset="0.35" stop-color="#272b37"/><stop offset="1" stop-color="#7a80a0"/></linearGradient><linearGradient id="h54" x1="510.9" y1="0" x2="533.1" y2="0" gradientUnits="userSpaceOnUse"><stop offset="0" stop-color="#181a22"/><stop offset="0.35" stop-color="#272b37"/><stop offset="1" stop-color="#7a80a0"/></linearGradient><linearGradient id="h55" x1="510.5" y1="0" x2="533.1" y2="0" gradientUnits="userSpaceOnUse"><stop offset="0" stop-color="#181a22"/><stop offset="0.35" stop-color="#272b37"/><stop offset="1" stop-color="#7a80a0"/></linearGradient><linearGradient id="h56" x1="510.1" y1="0" x2="532.9" y2="0" gradientUnits="userSpaceOnUse"><stop offset="0" stop-color="#181a22"/><stop offset="0.35" stop-color="#272b37"/><stop offset="1" stop-color="#7a80a0"/></linearGradient><linearGradient id="h57" x1="509.8" y1="0" x2="532.0" y2="0" gradientUnits="userSpaceOnUse"><stop offset="0" stop-color="#181a22"/><stop offset="0.35" stop-color="#272b37"/><stop offset="1" stop-color="#7a80a0"/></linearGradient><linearGradient id="h58" x1="509.3" y1="0" x2="531.0" y2="0" gradientUnits="userSpaceOnUse"><stop offset="0" stop-color="#181a22"/><stop offset="0.35" stop-color="#272b37"/><stop offset="1" stop-color="#7a80a0"/></linearGradient><linearGradient id="h59" x1="507.9" y1="0" x2="530.1" y2="0" gradientUnits="userSpaceOnUse"><stop offset="0" stop-color="#181a22"/><stop offset="0.35" stop-color="#272b37"/><stop offset="1" stop-color="#7a80a0"/></linearGradient><linearGradient id="h60" x1="506.5" y1="0" x2="529.2" y2="0" gradientUnits="userSpaceOnUse"><stop offset="0" stop-color="#181a22"/><stop offset="0.35" stop-color="#272b37"/><stop offset="1" stop-color="#7a80a0"/></linearGradient><linearGradient id="h61" x1="505.1" y1="0" x2="528.4" y2="0" gradientUnits="userSpaceOnUse"><stop offset="0" stop-color="#181a22"/><stop offset="0.35" stop-color="#272b37"/><stop offset="1" stop-color="#7a80a0"/></linearGradient><linearGradient id="h62" x1="503.7" y1="0" x2="527.5" y2="0" gradientUnits="userSpaceOnUse"><stop offset="0" stop-color="#181a22"/><stop offset="0.35" stop-color="#272b37"/><stop offset="1" stop-color="#7a80a0"/></linearGradient><linearGradient id="h63" x1="502.3" y1="0" x2="526.5" y2="0" gradientUnits="userSpaceOnUse"><stop offset="0" stop-color="#181a22"/><stop offset="0.35" stop-color="#272b37"/><stop offset="1" stop-color="#7a80a0"/></linearGradient><linearGradient id="h64" x1="501.0" y1="0" x2="525.6" y2="0" gradientUnits="userSpaceOnUse"><stop offset="0" stop-color="#181a22"/><stop offset="0.35" stop-color="#272b37"/><stop offset="1" stop-color="#7a80a0"/></linearGradient><linearGradient id="h65" x1="499.6" y1="0" x2="524.8" y2="0" gradientUnits="userSpaceOnUse"><stop offset="0" stop-color="#181a22"/><stop offset="0.35" stop-color="#272b37"/><stop offset="1" stop-color="#7a80a0"/></linearGradient><linearGradient id="h66" x1="498.2" y1="0" x2="523.8" y2="0" gradientUnits="userSpaceOnUse"><stop offset="0" stop-color="#181a22"/><stop offset="0.35" stop-color="#272b37"/><stop offset="1" stop-color="#7a80a0"/></linearGradient><linearGradient id="h67" x1="496.8" y1="0" x2="522.3" y2="0" gradientUnits="userSpaceOnUse"><stop offset="0" stop-color="#181a22"/><stop offset="0.35" stop-color="#272b37"/><stop offset="1" stop-color="#7a80a0"/></linearGradient><linearGradient id="h68" x1="495.4" y1="0" x2="520.9" y2="0" gradientUnits="userSpaceOnUse"><stop offset="0" stop-color="#181a22"/><stop offset="0.35" stop-color="#272b37"/><stop offset="1" stop-color="#7a80a0"/></linearGradient><linearGradient id="h69" x1="494.0" y1="0" x2="519.5" y2="0" gradientUnits="userSpaceOnUse"><stop offset="0" stop-color="#181a22"/><stop offset="0.35" stop-color="#272b37"/><stop offset="1" stop-color="#7a80a0"/></linearGradient><linearGradient id="h70" x1="492.7" y1="0" x2="518.0" y2="0" gradientUnits="userSpaceOnUse"><stop offset="0" stop-color="#181a22"/><stop offset="0.35" stop-color="#272b37"/><stop offset="1" stop-color="#7a80a0"/></linearGradient><linearGradient id="h71" x1="491.4" y1="0" x2="516.6" y2="0" gradientUnits="userSpaceOnUse"><stop offset="0" stop-color="#181a22"/><stop offset="0.35" stop-color="#272b37"/><stop offset="1" stop-color="#7a80a0"/></linearGradient><linearGradient id="h72" x1="490.9" y1="0" x2="515.2" y2="0" gradientUnits="userSpaceOnUse"><stop offset="0" stop-color="#181a22"/><stop offset="0.35" stop-color="#272b37"/><stop offset="1" stop-color="#7a80a0"/></linearGradient><linearGradient id="h73" x1="490.4" y1="0" x2="513.7" y2="0" gradientUnits="userSpaceOnUse"><stop offset="0" stop-color="#181a22"/><stop offset="0.35" stop-color="#272b37"/><stop offset="1" stop-color="#7a80a0"/></linearGradient><linearGradient id="h74" x1="489.9" y1="0" x2="512.7" y2="0" gradientUnits="userSpaceOnUse"><stop offset="0" stop-color="#181a22"/><stop offset="0.35" stop-color="#272b37"/><stop offset="1" stop-color="#7a80a0"/></linearGradient><linearGradient id="h75" x1="489.4" y1="0" x2="512.2" y2="0" gradientUnits="userSpaceOnUse"><stop offset="0" stop-color="#181a22"/><stop offset="0.35" stop-color="#272b37"/><stop offset="1" stop-color="#7a80a0"/></linearGradient><linearGradient id="h76" x1="488.9" y1="0" x2="511.6" y2="0" gradientUnits="userSpaceOnUse"><stop offset="0" stop-color="#181a22"/><stop offset="0.35" stop-color="#272b37"/><stop offset="1" stop-color="#7a80a0"/></linearGradient><linearGradient id="h77" x1="488.5" y1="0" x2="511.1" y2="0" gradientUnits="userSpaceOnUse"><stop offset="0" stop-color="#181a22"/><stop offset="0.35" stop-color="#272b37"/><stop offset="1" stop-color="#7a80a0"/></linearGradient><linearGradient id="h78" x1="488.0" y1="0" x2="510.5" y2="0" gradientUnits="userSpaceOnUse"><stop offset="0" stop-color="#181a22"/><stop offset="0.35" stop-color="#272b37"/><stop offset="1" stop-color="#7a80a0"/></linearGradient><linearGradient id="h79" x1="487.5" y1="0" x2="510.0" y2="0" gradientUnits="userSpaceOnUse"><stop offset="0" stop-color="#181a22"/><stop offset="0.35" stop-color="#272b37"/><stop offset="1" stop-color="#7a80a0"/></linearGradient><linearGradient id="h80" x1="487.0" y1="0" x2="509.5" y2="0" gradientUnits="userSpaceOnUse"><stop offset="0" stop-color="#181a22"/><stop offset="0.35" stop-color="#272b37"/><stop offset="1" stop-color="#7a80a0"/></linearGradient><linearGradient id="h81" x1="486.5" y1="0" x2="508.9" y2="0" gradientUnits="userSpaceOnUse"><stop offset="0" stop-color="#181a22"/><stop offset="0.35" stop-color="#272b37"/><stop offset="1" stop-color="#7a80a0"/></linearGradient><linearGradient id="h82" x1="486.0" y1="0" x2="508.4" y2="0" gradientUnits="userSpaceOnUse"><stop offset="0" stop-color="#181a22"/><stop offset="0.35" stop-color="#272b37"/><stop offset="1" stop-color="#7a80a0"/></linearGradient><linearGradient id="h83" x1="485.5" y1="0" x2="507.8" y2="0" gradientUnits="userSpaceOnUse"><stop offset="0" stop-color="#181a22"/><stop offset="0.35" stop-color="#272b37"/><stop offset="1" stop-color="#7a80a0"/></linearGradient><linearGradient id="h84" x1="485.0" y1="0" x2="507.3" y2="0" gradientUnits="userSpaceOnUse"><stop offset="0" stop-color="#181a22"/><stop offset="0.35" stop-color="#272b37"/><stop offset="1" stop-color="#7a80a0"/></linearGradient><linearGradient id="h85" x1="484.5" y1="0" x2="506.7" y2="0" gradientUnits="userSpaceOnUse"><stop offset="0" stop-color="#181a22"/><stop offset="0.35" stop-color="#272b37"/><stop offset="1" stop-color="#7a80a0"/></linearGradient><linearGradient id="h86" x1="484.0" y1="0" x2="506.2" y2="0" gradientUnits="userSpaceOnUse"><stop offset="0" stop-color="#181a22"/><stop offset="0.35" stop-color="#272b37"/><stop offset="1" stop-color="#7a80a0"/></linearGradient><linearGradient id="h87" x1="483.5" y1="0" x2="505.6" y2="0" gradientUnits="userSpaceOnUse"><stop offset="0" stop-color="#181a22"/><stop offset="0.35" stop-color="#272b37"/><stop offset="1" stop-color="#7a80a0"/></linearGradient><linearGradient id="h88" x1="483.0" y1="0" x2="505.1" y2="0" gradientUnits="userSpaceOnUse"><stop offset="0" stop-color="#181a22"/><stop offset="0.35" stop-color="#272b37"/><stop offset="1" stop-color="#7a80a0"/></linearGradient><linearGradient id="h89" x1="482.8" y1="0" x2="504.3" y2="0" gradientUnits="userSpaceOnUse"><stop offset="0" stop-color="#181a22"/><stop offset="0.35" stop-color="#272b37"/><stop offset="1" stop-color="#7a80a0"/></linearGradient><linearGradient id="h90" x1="484.0" y1="0" x2="503.6" y2="0" gradientUnits="userSpaceOnUse"><stop offset="0" stop-color="#181a22"/><stop offset="0.35" stop-color="#272b37"/><stop offset="1" stop-color="#7a80a0"/></linearGradient><linearGradient id="h91" x1="485.3" y1="0" x2="502.8" y2="0" gradientUnits="userSpaceOnUse"><stop offset="0" stop-color="#181a22"/><stop offset="0.35" stop-color="#272b37"/><stop offset="1" stop-color="#7a80a0"/></linearGradient><linearGradient id="h92" x1="486.5" y1="0" x2="502.0" y2="0" gradientUnits="userSpaceOnUse"><stop offset="0" stop-color="#181a22"/><stop offset="0.35" stop-color="#272b37"/><stop offset="1" stop-color="#7a80a0"/></linearGradient><linearGradient id="h93" x1="487.7" y1="0" x2="501.2" y2="0" gradientUnits="userSpaceOnUse"><stop offset="0" stop-color="#181a22"/><stop offset="0.35" stop-color="#272b37"/><stop offset="1" stop-color="#7a80a0"/></linearGradient><linearGradient id="h94" x1="489.0" y1="0" x2="500.4" y2="0" gradientUnits="userSpaceOnUse"><stop offset="0" stop-color="#181a22"/><stop offset="0.35" stop-color="#272b37"/><stop offset="1" stop-color="#7a80a0"/></linearGradient><linearGradient id="h95" x1="490.1" y1="0" x2="499.7" y2="0" gradientUnits="userSpaceOnUse"><stop offset="0" stop-color="#181a22"/><stop offset="0.35" stop-color="#272b37"/><stop offset="1" stop-color="#7a80a0"/></linearGradient><linearGradient id="h96" x1="490.8" y1="0" x2="498.9" y2="0" gradientUnits="userSpaceOnUse"><stop offset="0" stop-color="#181a22"/><stop offset="0.35" stop-color="#272b37"/><stop offset="1" stop-color="#7a80a0"/></linearGradient><linearGradient id="h97" x1="491.5" y1="0" x2="498.6" y2="0" gradientUnits="userSpaceOnUse"><stop offset="0" stop-color="#181a22"/><stop offset="0.35" stop-color="#272b37"/><stop offset="1" stop-color="#7a80a0"/></linearGradient><linearGradient id="h98" x1="492.3" y1="0" x2="498.3" y2="0" gradientUnits="userSpaceOnUse"><stop offset="0" stop-color="#181a22"/><stop offset="0.35" stop-color="#272b37"/><stop offset="1" stop-color="#7a80a0"/></linearGradient><linearGradient id="h99" x1="493.0" y1="0" x2="497.9" y2="0" gradientUnits="userSpaceOnUse"><stop offset="0" stop-color="#181a22"/><stop offset="0.35" stop-color="#272b37"/><stop offset="1" stop-color="#7a80a0"/></linearGradient><linearGradient id="h100" x1="493.7" y1="0" x2="497.6" y2="0" gradientUnits="userSpaceOnUse"><stop offset="0" stop-color="#181a22"/><stop offset="0.35" stop-color="#272b37"/><stop offset="1" stop-color="#7a80a0"/></linearGradient><linearGradient id="h101" x1="494.4" y1="0" x2="497.3" y2="0" gradientUnits="userSpaceOnUse"><stop offset="0" stop-color="#181a22"/><stop offset="0.35" stop-color="#272b37"/><stop offset="1" stop-color="#7a80a0"/></linearGradient></defs><g filter="url(#b2)"><rect x="495.5" y="398" width="22.5" height="3.2" fill="url(#h0)"/><rect x="495.9" y="401" width="22.6" height="3.2" fill="url(#h1)"/><rect x="496.4" y="404" width="22.7" height="3.2" fill="url(#h2)"/><rect x="496.8" y="407" width="22.9" height="3.2" fill="url(#h3)"/><rect x="497.3" y="410" width="23.0" height="3.2" fill="url(#h4)"/><rect x="497.8" y="413" width="23.1" height="3.2" fill="url(#h5)"/><rect x="498.2" y="416" width="23.3" height="3.2" fill="url(#h6)"/><rect x="498.7" y="419" width="23.4" height="3.2" fill="url(#h7)"/><rect x="499.2" y="422" width="23.5" height="3.2" fill="url(#h8)"/><rect x="499.6" y="425" width="23.7" height="3.2" fill="url(#h9)"/><rect x="500.0" y="428" width="23.9" height="3.2" fill="url(#h10)"/><rect x="500.3" y="431" width="24.2" height="3.2" fill="url(#h11)"/><rect x="500.6" y="434" width="24.5" height="3.2" fill="url(#h12)"/><rect x="500.9" y="437" width="24.8" height="3.2" fill="url(#h13)"/><rect x="501.2" y="440" width="25.1" height="3.2" fill="url(#h14)"/><rect x="501.5" y="443" width="25.4" height="3.2" fill="url(#h15)"/><rect x="501.8" y="446" width="25.7" height="3.2" fill="url(#h16)"/><rect x="502.0" y="449" width="26.1" height="3.2" fill="url(#h17)"/><rect x="502.2" y="452" width="26.5" height="3.2" fill="url(#h18)"/><rect x="502.3" y="455" width="26.9" height="3.2" fill="url(#h19)"/><rect x="502.4" y="458" width="27.4" height="3.2" fill="url(#h20)"/><rect x="502.5" y="461" width="27.8" height="3.2" fill="url(#h21)"/><rect x="502.7" y="464" width="28.2" height="3.2" fill="url(#h22)"/><rect x="502.8" y="467" width="28.6" height="3.2" fill="url(#h23)"/><rect x="502.9" y="470" width="29.1" height="3.2" fill="url(#h24)"/><rect x="503.1" y="473" width="29.5" height="3.2" fill="url(#h25)"/><rect x="503.2" y="476" width="29.9" height="3.2" fill="url(#h26)"/><rect x="503.3" y="479" width="30.3" height="3.2" fill="url(#h27)"/><rect x="503.5" y="482" width="30.8" height="3.2" fill="url(#h28)"/><rect x="503.6" y="485" width="31.2" height="3.2" fill="url(#h29)"/><rect x="503.7" y="488" width="31.6" height="3.2" fill="url(#h30)"/><rect x="503.9" y="491" width="32.1" height="3.2" fill="url(#h31)"/><rect x="504.0" y="494" width="32.0" height="3.2" fill="url(#h32)"/><rect x="504.1" y="497" width="31.7" height="3.2" fill="url(#h33)"/><rect x="504.2" y="500" width="31.5" height="3.2" fill="url(#h34)"/><rect x="504.4" y="503" width="31.3" height="3.2" fill="url(#h35)"/><rect x="504.5" y="506" width="31.1" height="3.2" fill="url(#h36)"/><rect x="504.6" y="509" width="30.9" height="3.2" fill="url(#h37)"/><rect x="504.5" y="512" width="30.9" height="3.2" fill="url(#h38)"/><rect x="504.2" y="515" width="31.2" height="3.2" fill="url(#h39)"/><rect x="503.8" y="518" width="31.5" height="3.2" fill="url(#h40)"/><rect x="503.5" y="521" width="31.7" height="3.2" fill="url(#h41)"/><rect x="503.1" y="524" width="32.0" height="3.2" fill="url(#h42)"/><rect x="502.8" y="527" width="32.3" height="3.2" fill="url(#h43)"/><rect x="502.4" y="530" width="32.6" height="3.2" fill="url(#h44)"/><rect x="502.0" y="533" width="32.8" height="3.2" fill="url(#h45)"/><rect x="501.7" y="536" width="33.1" height="3.2" fill="url(#h46)"/><rect x="501.3" y="539" width="33.4" height="3.2" fill="url(#h47)"/><rect x="501.0" y="542" width="33.7" height="3.2" fill="url(#h48)"/><rect x="500.6" y="545" width="33.9" height="3.2" fill="url(#h49)"/><rect x="500.3" y="548" width="34.2" height="3.2" fill="url(#h50)"/><rect x="499.9" y="551" width="34.5" height="3.2" fill="url(#h51)"/><rect x="499.6" y="554" width="34.7" height="3.2" fill="url(#h52)"/><rect x="499.2" y="557" width="35.0" height="3.2" fill="url(#h53)"/><rect x="498.9" y="560" width="35.3" height="3.2" fill="url(#h54)"/><rect x="498.5" y="563" width="35.6" height="3.2" fill="url(#h55)"/><rect x="498.1" y="566" width="35.7" height="3.2" fill="url(#h56)"/><rect x="497.8" y="569" width="35.2" height="3.2" fill="url(#h57)"/><rect x="497.3" y="572" width="34.8" height="3.2" fill="url(#h58)"/><rect x="495.9" y="575" width="35.3" height="3.2" fill="url(#h59)"/><rect x="494.5" y="578" width="35.8" height="3.2" fill="url(#h60)"/><rect x="493.1" y="581" width="36.2" height="3.2" fill="url(#h61)"/><rect x="491.7" y="584" width="36.7" height="3.2" fill="url(#h62)"/><rect x="490.3" y="587" width="37.2" height="3.2" fill="url(#h63)"/><rect x="489.0" y="590" width="37.7" height="3.2" fill="url(#h64)"/><rect x="487.6" y="593" width="38.2" height="3.2" fill="url(#h65)"/><rect x="486.2" y="596" width="38.6" height="3.2" fill="url(#h66)"/><rect x="484.8" y="599" width="38.5" height="3.2" fill="url(#h67)"/><rect x="483.4" y="602" width="38.5" height="3.2" fill="url(#h68)"/><rect x="482.0" y="605" width="38.4" height="3.2" fill="url(#h69)"/><rect x="480.7" y="608" width="38.4" height="3.2" fill="url(#h70)"/><rect x="479.4" y="611" width="38.2" height="3.2" fill="url(#h71)"/><rect x="478.9" y="614" width="37.2" height="3.2" fill="url(#h72)"/><rect x="478.4" y="617" width="36.3" height="3.2" fill="url(#h73)"/><rect x="477.9" y="620" width="35.8" height="3.2" fill="url(#h74)"/><rect x="477.4" y="623" width="35.7" height="3.2" fill="url(#h75)"/><rect x="476.9" y="626" width="35.7" height="3.2" fill="url(#h76)"/><rect x="476.5" y="629" width="35.6" height="3.2" fill="url(#h77)"/><rect x="476.0" y="632" width="35.6" height="3.2" fill="url(#h78)"/><rect x="475.5" y="635" width="35.5" height="3.2" fill="url(#h79)"/><rect x="475.0" y="638" width="35.5" height="3.2" fill="url(#h80)"/><rect x="474.5" y="641" width="35.4" height="3.2" fill="url(#h81)"/><rect x="474.0" y="644" width="35.4" height="3.2" fill="url(#h82)"/><rect x="473.5" y="647" width="35.3" height="3.2" fill="url(#h83)"/><rect x="473.0" y="650" width="35.3" height="3.2" fill="url(#h84)"/><rect x="472.5" y="653" width="35.2" height="3.2" fill="url(#h85)"/><rect x="472.0" y="656" width="35.2" height="3.2" fill="url(#h86)"/><rect x="471.5" y="659" width="35.1" height="3.2" fill="url(#h87)"/><rect x="471.0" y="662" width="35.1" height="3.2" fill="url(#h88)"/><rect x="470.8" y="665" width="34.5" height="3.2" fill="url(#h89)"/><rect x="472.0" y="668" width="32.5" height="3.2" fill="url(#h90)"/><rect x="473.3" y="671" width="30.5" height="3.2" fill="url(#h91)"/><rect x="474.5" y="674" width="28.5" height="3.2" fill="url(#h92)"/><rect x="475.7" y="677" width="26.5" height="3.2" fill="url(#h93)"/><rect x="477.0" y="680" width="24.5" height="3.2" fill="url(#h94)"/><rect x="478.1" y="683" width="22.5" height="3.2" fill="url(#h95)"/><rect x="478.8" y="686" width="21.1" height="3.2" fill="url(#h96)"/><rect x="479.5" y="689" width="20.1" height="3.2" fill="url(#h97)"/><rect x="480.3" y="692" width="19.0" height="3.2" fill="url(#h98)"/><rect x="481.0" y="695" width="18.0" height="3.2" fill="url(#h99)"/><rect x="481.7" y="698" width="16.9" height="3.2" fill="url(#h100)"/><rect x="482.4" y="701" width="15.9" height="3.2" fill="url(#h101)"/></g>
<path d="M543,460 L550,500 L548,570 L525,620 L515,690" stroke="#a8aed0" stroke-width="12" fill="none" filter="url(#b5)"/>
<path d="M635,440 L622,569 L598,630 L575,690" stroke="#b4bad8" stroke-width="10" fill="none" filter="url(#b5)"/>
</g>
<!-- WAISTBAND -->
<path d="M495,91 Q600,80 702,92 Q750,100 781,116 L780,150 L761,160 L690.5,166.5 L640,164 L547,147 L495,128.5 Z" fill="url(#gBand)"/>
<path d="M495,91 Q600,80 702,92 Q750,100 781,116 L766,121 L727,125 L694,127.6 L650,125 L600,122 L547,112 L495.7,98 Z" fill="url(#gTop)"/>
<!-- STRIPE -->
<linearGradient id="gStripe" x1="0" y1="158" x2="0" y2="687" gradientUnits="userSpaceOnUse"><stop offset="0" stop-color="#e46a9c"/><stop offset="0.5" stop-color="#d6608f"/><stop offset="1" stop-color="#c45283"/></linearGradient>
<path d="M544.5,158 L528,245 L519,289 L516,333 L517,400 L527,450 L535,493 L533,567 L524,597 L513,620 L505,664 L499,687 L505,687 L512,664 L520,620 L531,597 L540,567 L542,493 L533,450 L523,400 L522,333 L525.5,289 L534,245 L550.5,158 Z" fill="url(#gStripe)"/>
<!-- grid overlays -->
<line x1="490" y1="175.9" x2="530" y2="172.3" stroke="#9a2838" stroke-width="1.3" opacity="0.8"/>
<line x1="733" y1="168.9" x2="780" y2="173.1" stroke="#2a8c3c" stroke-width="1.3" opacity="0.8"/>
</svg>
<!-- /PANTS -->
<!-- left panel -->
<div class="abs" style="left:1px;top:30px;width:200px;height:24px;background:#bcc4ce"></div>
<div class="abs" style="left:3px;top:31px;width:21px;height:21px;border:2px solid #8b929b;background:#f1f3f5"></div>
<div class="abs" style="left:31px;top:32px;font-size:15.5px;color:#111;line-height:20px">Multiple Rendering</div>
<div class="abs" style="left:1px;top:54px;width:200px;height:28px;background:#f0f0f0"></div>
<div class="abs" style="left:1px;top:75px;width:200px;height:3px;background:rgba(0,0,0,0.06)"></div><div class="abs" style="left:1px;top:81px;width:200px;height:1px;background:rgba(0,0,0,0.05)"></div>
<div class="abs" style="left:9px;top:59px;font-size:14.5px;color:#333;line-height:18px">lowr_000_u</div>
<div class="abs" style="left:1px;top:82px;width:200px;height:669px;background:linear-gradient(#dde0e4,#c8c9ca)"></div>
<div class="abs" style="left:201px;top:30px;width:4px;height:721px;background:linear-gradient(#bcc3cb,#aab0b8 270px,#9a9da2 560px,#94969a)"></div>
<svg class="abs" style="left:0;top:0" width="205" height="752">
<line x1="1" y1="104.5" x2="201" y2="122.1" stroke="#a6d6a6" stroke-width="1" opacity="0.5"/>
<line x1="1" y1="219.3" x2="201" y2="201.5" stroke="#e0b8bc" stroke-width="1" opacity="0.5"/>
<path d="M183.1,662.6 L183.1,727.2 L175.2,727.2 L175.2,672.4 Q168,677 159.8,679.8 L159.8,672.2 Q171,668.5 180.5,662.6 Z" fill="#9d9e9e"/>
</svg>
<!-- title bar -->
<div id="title" class="abs"></div>
<svg class="abs" style="left:9px;top:6px" width="16" height="16">
<defs><linearGradient id="icb" x1="0" y1="0" x2="1" y2="1"><stop offset="0" stop-color="#c8c8c8"/><stop offset="0.45" stop-color="#d8b040"/><stop offset="0.7" stop-color="#555"/><stop offset="1" stop-color="#e0b030"/></linearGradient>
<linearGradient id="icf" x1="0" y1="0" x2="0" y2="1"><stop offset="0" stop-color="#f0f0f0"/><stop offset="1" stop-color="#c4c4c4"/></linearGradient></defs>
<rect x="1" y="1" width="14" height="14" rx="1" fill="url(#icb)"/>
<rect x="2.5" y="2.5" width="11" height="11" fill="url(#icf)"/>
<path d="M4.6,4.2 L6.4,4.2 L5.6,11.2 L3.8,11.2 Z M6.8,4.2 L8.6,4.2 L9,8.6 L10.6,4.2 L12.2,4.2 L9.4,11.2 L7.6,11.2 Z" fill="#111"/>
</svg>
<div class="abs" style="left:30px;top:7px;font-size:11.75px;color:#000;line-height:16px">lowr_000_u.ydd - OpenIV Model Viewer</div>
<svg class="abs" style="left:1150px;top:0" width="125" height="30">
<line x1="11.5" y1="14.5" x2="22" y2="14.5" stroke="#000" stroke-width="1"/>
<rect x="57.5" y="9.5" width="9" height="9" fill="none" stroke="#000" stroke-width="1"/>
<line x1="103" y1="9.5" x2="113" y2="19.5" stroke="#000" stroke-width="1.1"/>
<line x1="113" y1="9.5" x2="103" y2="19.5" stroke="#000" stroke-width="1.1"/>
</svg>
<!-- viewport text -->
<div class="abs mono y" style="right:935px;top:34px">FPS: 62.07</div>
<div class="abs mono y" style="right:935px;top:58px">Polygons: 1,136</div>
<div class="abs mono y" style="right:935px;top:71px">Vertices: 1,089</div>
<div class="abs mono w" style="left:215px;top:89px">[ More information ]</div>
<div class="abs mono" style="left:650px;top:34px;color:#c8b430">Geometry</div>
<div class="abs mono" style="left:713px;top:34px;color:#d8c420">|</div>
<div class="abs mono" style="left:722px;top:34px;color:#8a8e94">Bounds</div>
<div class="abs mono" style="left:768px;top:34px;color:#d8c420">|</div>
<div class="abs mono" style="left:780px;top:34px;color:#8a8e94">Skeleton</div>
<div class="abs mono w" style="right:11px;top:35px">Click here for help</div>
<div class="abs mono y" style="right:60px;top:59px;text-align:right;line-height:13px">Camera mode:<br>Show grid:</div>
<div class="abs mono w" style="left:1226px;top:59px;line-height:13px">Around<br>True</div>
<div class="abs mono y" style="right:60px;top:98px;text-align:right;line-height:13.3px">Geometry:<br>Edged Faces:<br>Display Points:<br>Level of Detail:</div>
<div class="abs mono w" style="left:1226px;top:98px;line-height:13.3px">True<br>False<br>False<br>High</div>
<div class="abs mono" style="right:10px;top:644px;text-align:right;line-height:17px"><span class="y">Using textures:</span><br><span class="w">[-]</span><br><span class="w">[+] Add texture</span><br><span class="y">lowr_000_u.ydd</span><br><span class="w">[ View embedded textures ]</span><br><span class="w">[ Export embedded textures ]</span></div>
<div class="abs mono g" style="right:35px;top:661px;line-height:17px">lowr_diff_000_a_uni.ytd</div>
<svg class="abs" style="left:215px;top:670px" width="70" height="50">
<line x1="31" y1="43.6" x2="31" y2="16" stroke="#2020c8" stroke-width="1.5"/>
<line x1="31" y1="43.6" x2="51.6" y2="36.8" stroke="#c02020" stroke-width="1.5"/>
<line x1="31" y1="43.6" x2="9.2" y2="36.8" stroke="#20a030" stroke-width="1.5"/>
<text x="32" y="12" font-family="Liberation Sans" font-size="10" fill="#2020c8">z</text>
<text x="53" y="34" font-family="Liberation Sans" font-size="10" fill="#c02020">x</text>
<text x="11" y="34" font-family="Liberation Sans" font-size="10" fill="#20a030">y</text>
</svg>
</body></html>
